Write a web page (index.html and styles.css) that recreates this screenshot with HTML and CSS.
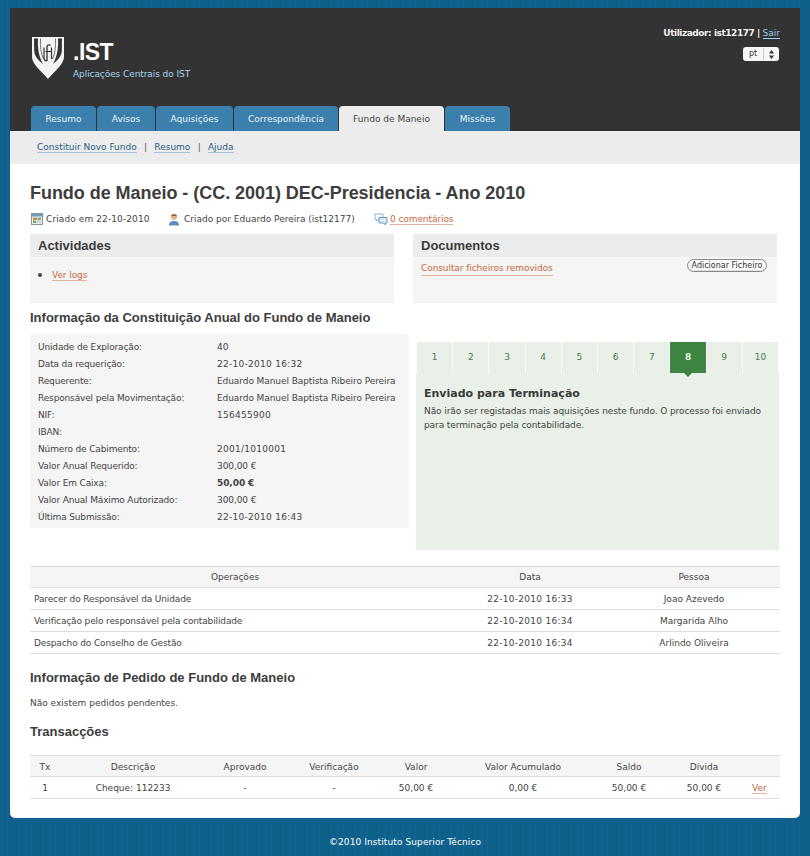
FILE: index.html
```html
<!DOCTYPE html>
<html lang="pt">
<head>
<meta charset="utf-8">
<title>Fundo de Maneio</title>
<link rel="stylesheet" href="styles.css">
</head>
<body>
<div class="page">
  <header class="top">
    <div class="top-row">
      <div class="brand">
        <svg class="logo" width="32" height="42" viewBox="0 0 32 42">
          <path d="M0 0H32V20C32 27 22 35 16 42C10 35 0 27 0 20Z" fill="#f4f4f4"/>
          <path d="M2 1.500H6C5.500 10 6.500 19 11 27C6 23 2.500 19 2.200 14Z" fill="#333"/>
          <path d="M30 1.500H26C26.500 10 25.500 19 21 27C26 23 29.500 19 29.800 14Z" fill="#333"/>
          <path d="M8.500 1.500C8 9 9 17 11.500 22" fill="none" stroke="#555" stroke-width=".8"/>
          <path d="M23.500 1.500C24 9 23 17 20.500 22" fill="none" stroke="#555" stroke-width=".8"/>
          <path d="M12 10.500V21C12 23 13.500 24 15 24" fill="none" stroke="#333" stroke-width="1.200"/>
          <path d="M15 24V9.500C15 7.500 18 7.500 18.500 8.500" fill="none" stroke="#333" stroke-width="1.300"/>
          <path d="M13.500 14.500H19.500M19.500 10.500V22" fill="none" stroke="#333" stroke-width="1.200"/>
        </svg>
        <div class="brand-text">
          <div class="brand-name">.IST</div>
          <div class="brand-sub">Aplicações Centrais do IST</div>
        </div>
      </div>
      <div class="user-area">
        <div class="user">Utilizador: ist12177 | <a class="user-link" href="#">Sair</a></div>
        <div class="lang"><span class="lang-val">pt</span><span class="lang-arrows"><svg width="5" height="9" viewBox="0 0 5 9"><path d="M2.500 0L5 3.500H0ZM2.500 9L0 5.500H5Z" fill="#333"/></svg></span></div>
      </div>
    </div>
    <nav class="tabs">
      <a class="tab t1" href="#">Resumo</a>
      <a class="tab t2" href="#">Avisos</a>
      <a class="tab t3" href="#">Aquisições</a>
      <a class="tab t4" href="#">Correspondência</a>
      <a class="tab t5 active" href="#">Fundo de Maneio</a>
      <a class="tab t6" href="#">Missões</a>
    </nav>
  </header>
  <div class="subnav">
    <a class="navlink" href="#">Constituir Novo Fundo</a><span class="sep">|</span><a class="navlink" href="#">Resumo</a><span class="sep">|</span><a class="navlink" href="#">Ajuda</a>
  </div>
  <main class="content">
    <h1 class="title">Fundo de Maneio - (CC. 2001) DEC-Presidencia - Ano 2010</h1>
    <div class="meta">
      <span class="meta-item m1">
        <svg width="12" height="12" viewBox="0 0 12 12"><rect x=".5" y=".5" width="11" height="11" fill="#e8eef2" stroke="#7f97a8"/><rect x="1" y="1" width="10" height="2.500" fill="#6f9ec0"/><rect x="2" y="4.500" width="4" height="2.500" fill="#d98a4a"/><rect x="6.500" y="4.500" width="3.500" height="2.500" fill="#8db56a"/><rect x="2" y="7.500" width="3" height="2.500" fill="#7fa85f"/><rect x="5.500" y="7.500" width="4.500" height="2.500" fill="#c9d3da"/></svg>
        <span class="created">Criado em 22-10-2010</span>
      </span>
      <span class="meta-item m2">
        <svg width="12" height="13" viewBox="0 0 12 13"><path d="M1 12.500C1 9 3 8 6 8C9 8 11 9 11 12.500Z" fill="#5b8fc4"/><circle cx="6" cy="4" r="3" fill="#e4b48c"/><path d="M3 3.500C3 .5 9 .5 9 3.500C7.500 2.500 4.500 2.500 3 3.500Z" fill="#8a5a34"/></svg>
        Criado por Eduardo Pereira (ist12177)
      </span>
      <span class="meta-item m3">
        <svg width="14" height="13" viewBox="0 0 14 13"><path d="M1 1H9V6.500H4L2.500 8V6.500H1Z" fill="#fff" stroke="#7ea6cf" stroke-width=".9"/><path d="M5 4.500H13V10H11.500V12L9.500 10H5Z" fill="#dfeaf5" stroke="#5f8fc0" stroke-width=".9"/></svg>
        <a class="link tight" href="#">0 comentários</a>
      </span>
    </div>
    <div class="boxes">
      <section class="box">
        <h3 class="box-head">Actividades</h3>
        <div class="box-body">
          <ul class="logs"><li class="log-item"><a class="link tight" href="#">Ver logs</a></li></ul>
        </div>
      </section>
      <section class="box">
        <h3 class="box-head">Documentos</h3>
        <div class="box-body docs">
          <a class="link tight" href="#">Consultar ficheiros removidos</a>
          <button class="btn" type="button">Adicionar Ficheiro</button>
        </div>
      </section>
    </div>
    <h2 class="section first">Informação da Constituição Anual do Fundo de Maneio</h2>
    <div class="info-row">
      <dl class="info">
        <dt>Unidade de Exploração:</dt><dd>40</dd>
        <dt>Data da requerição:</dt><dd class="num">22-10-2010 16:32</dd>
        <dt>Requerente:</dt><dd>Eduardo Manuel Baptista Ribeiro Pereira</dd>
        <dt>Responsável pela Movimentação:</dt><dd>Eduardo Manuel Baptista Ribeiro Pereira</dd>
        <dt>NIF:</dt><dd class="num">156455900</dd>
        <dt>IBAN:</dt><dd></dd>
        <dt>Número de Cabimento:</dt><dd class="num">2001/1010001</dd>
        <dt>Valor Anual Requerido:</dt><dd>300,00 €</dd>
        <dt>Valor Em Caixa:</dt><dd class="strong">50,00 €</dd>
        <dt>Valor Anual Máximo Autorizado:</dt><dd>300,00 €</dd>
        <dt>Última Submissão:</dt><dd class="num">22-10-2010 16:43</dd>
      </dl>
      <div class="flow">
        <div class="steps">
          <span class="step">1</span><span class="step">2</span><span class="step">3</span><span class="step">4</span><span class="step">5</span><span class="step">6</span><span class="step">7</span><span class="step current">8</span><span class="step">9</span><span class="step">10</span>
        </div>
        <div class="panel">
          <h4 class="panel-title">Enviado para Terminação</h4>
          <p class="panel-text">Não irão ser registadas mais aquisições neste fundo. O processo foi enviado para terminação pela contabilidade.</p>
        </div>
      </div>
    </div>
    <table class="grid ops">
      <thead><tr><th class="o1">Operações</th><th class="o2">Data</th><th class="o3">Pessoa</th></tr></thead>
      <tbody>
        <tr><td class="left">Parecer do Responsável da Unidade</td><td class="num">22-10-2010 16:33</td><td>Joao Azevedo</td></tr>
        <tr><td class="left">Verificação pelo responsável pela contabilidade</td><td class="num">22-10-2010 16:34</td><td>Margarida Alho</td></tr>
        <tr><td class="left">Despacho do Conselho de Gestão</td><td class="num">22-10-2010 16:34</td><td>Arlindo Oliveira</td></tr>
      </tbody>
    </table>
    <h2 class="section second">Informação de Pedido de Fundo de Maneio</h2>
    <p class="pending">Não existem pedidos pendentes.</p>
    <h2 class="section third">Transacções</h2>
    <table class="grid tx">
      <thead><tr><th class="c1">Tx</th><th class="c2">Descrição</th><th class="c3">Aprovado</th><th class="c4">Verificação</th><th class="c5">Valor</th><th class="c6">Valor Acumulado</th><th class="c7">Saldo</th><th class="c8">Dívida</th><th class="c9"></th></tr></thead>
      <tbody>
        <tr><td>1</td><td>Cheque: 112233</td><td>-</td><td>-</td><td>50,00 €</td><td>0,00 €</td><td>50,00 €</td><td>50,00 €</td><td class="ver"><a class="link" href="#">Ver</a></td></tr>
      </tbody>
    </table>
  </main>
  <footer class="foot">©2010 Instituto Superior Técnico</footer>
</div>
</body>
</html>
```
FILE: styles.css
```css
* { box-sizing: border-box; }
html, body { margin: 0; padding: 0; }
body {
  height: 856px;
  overflow: hidden;
  background: #10638f repeating-linear-gradient(90deg, #10638f 0, #10638f 3px, #0f5f8b 3px, #0f5f8b 6px);
  font-family: "DejaVu Sans", Verdana, sans-serif;
  font-size: 9px;
  color: #444;
}
a { text-decoration: none; }
.page { width: 790px; margin-left: 10px; padding-top: 8px; }
.num { letter-spacing: .27px; }
.created { letter-spacing: .1px; }
.tight { letter-spacing: -.08px; }

.top { height: 123px; background: #333; display: flex; flex-direction: column; justify-content: space-between; }
.top-row { display: flex; justify-content: space-between; padding: 19px 20px 0 22px; }
.brand { display: flex; gap: 9px; padding-top: 10px; }
.logo { display: block; }
.brand-name { font: bold 23px/24px "Liberation Sans", Arial, sans-serif; color: #fff; padding-top: 3px; letter-spacing: -.5px; }
.brand-sub { color: #a9d3ef; line-height: 12px; margin-top: 4px; letter-spacing: -.08px; }
.user-area { display: flex; flex-direction: column; align-items: flex-end; }
.user { color: #f2f2f2; font-weight: bold; font-size: 9px; line-height: 12px; letter-spacing: -.45px; }
.user-link { color: #9ecdee; font-weight: normal; border-bottom: 1px solid #9ecdee; letter-spacing: 0; }
.lang { display: flex; margin: 8px 1px 0 0; width: 36px; height: 14px; background: #f6f6f6; border-radius: 3px; align-items: center; font-size: 8px; color: #333; }
.lang-val { width: 21px; text-align: center; border-right: 1px solid #ccc; line-height: 12px; }
.lang-arrows { flex: 1; display: flex; justify-content: center; }

.tabs { display: flex; gap: 1px; padding-left: 21px; }
.tab { height: 25px; line-height: 26px; text-align: center; background: #3b80ad; color: #eaf3f9; border-radius: 4px 4px 0 0; }
.tab.active { background: #ececec; color: #444; }
.t1 { width: 65px; }
.t2 { width: 58px; }
.t3 { width: 77px; }
.t4 { width: 104px; }
.t5 { width: 105px; }
.t6 { width: 65px; }

.subnav { height: 33px; background: #ececec; padding: 10px 0 0 27px; line-height: 13px; }
.navlink { color: #2b5f85; border-bottom: 1px solid #a9c3d6; }
.sep { margin: 0 7.25px; color: #555; }

.content { height: 654px; background: #fff; border-radius: 0 0 5px 5px; padding: 18px 20px 0; }
.title { margin: 0; font: bold 18px/22px "Liberation Sans", Arial, sans-serif; color: #3d3d3d; letter-spacing: -.04px; }
.meta { display: flex; align-items: center; height: 14px; margin-top: 8px; }
.meta-item { display: flex; align-items: center; gap: 3px; }
.m1 { width: 134px; padding-left: 1px; }
.m2 { width: 210px; padding-left: 4px; gap: 4px; }
.m3 { gap: 2px; }
.link { color: #c8693f; border-bottom: 1px solid #e3b09a; }

.boxes { display: flex; justify-content: space-between; width: 747px; margin-top: 8px; }
.box { width: 364px; height: 69px; background: #f5f5f5; }
.box-head { margin: 0; height: 23px; padding-left: 8px; background: #ececec; font: bold 13px/23px "Liberation Sans", Arial, sans-serif; color: #3d3d3d; }
.box-body { position: relative; }
.logs { margin: 0; padding: 11px 0 0 8px; list-style: none; }
.log-item { line-height: 14px; padding-left: 14px; position: relative; }
.log-item::before { content: ""; position: absolute; left: 0; top: 5px; width: 4px; height: 4px; border-radius: 50%; background: #444; }
.docs { display: flex; justify-content: space-between; align-items: flex-start; padding: 4px 10px 0 8px; line-height: 14px; }
.btn { height: 13px; width: 80px; padding: 0; margin-top: -2px; border: 1px solid #888; border-radius: 7px; background: #fbfbfb; font: 8px/11px "DejaVu Sans", Verdana, sans-serif; color: #333; box-shadow: inset 0 -1px 1px #ddd; }

.section { margin: 0; font: bold 13px/18px "Liberation Sans", Arial, sans-serif; color: #3d3d3d; }
.first { margin-top: 6px; }
.info-row { display: flex; margin-top: 7px; }
.info { width: 379px; height: 194px; margin: 0; padding: 5px 0 0 8px; background: #f5f5f5; border-radius: 3px; display: grid; grid-template-columns: 179px 1fr; grid-auto-rows: 17px; line-height: 17px; }
.info dt { letter-spacing: -.15px; }
.info dd { margin: 0; letter-spacing: -.08px; }
.info dd.num { letter-spacing: .27px; }
.strong { font-weight: bold; }
.flow { width: 363px; margin-left: 7px; padding-top: 8px; }
.steps { display: flex; gap: 1px; height: 31px; padding: 0 1px; }
.step { flex: 1; text-align: center; line-height: 31px; background: #e8f0e8; color: #4a7a4c; position: relative; }
.step.current { background: #3d8540; color: #e8f5e8; font-weight: bold; }
.step.current::after { content: ""; position: absolute; left: 50%; bottom: -4px; margin-left: -4px; border-left: 4px solid transparent; border-right: 4px solid transparent; border-top: 4px solid #3d8540; }
.panel { height: 177px; background: #e8f0e8; padding: 14px 8px 0; }
.panel-title { margin: 0; font-size: 11px; line-height: 13px; font-weight: bold; color: #3a3a3a; }
.panel-text { margin: 4px 0 0; line-height: 14px; letter-spacing: -.09px; }

.grid { width: 750px; border-collapse: collapse; table-layout: fixed; text-align: center; }
.grid th { height: 21px; font-weight: normal; background: #f5f5f5; border-top: 1px solid #ddd; border-bottom: 1px solid #ddd; padding: 0; }
.grid td { height: 22px; border-bottom: 1px solid #ddd; padding: 0; }
.ops { margin-top: 16px; }
.o1 { width: 410px; }
.o2 { width: 180px; }
.o3 { width: 160px; }
.ops th.o3 { padding-right: 12px; }
.ops td:last-child { padding-right: 12px; }
.grid td.left { text-align: left; padding-left: 4px; letter-spacing: -.13px; }
.second { margin-top: 15px; }
.pending { margin: 10px 0 0; line-height: 12px; }
.third { margin-top: 14px; }
.tx { margin-top: 14px; }
.tx th { padding-top: 2px; }
.tx td { padding-top: 1px; }
.c1 { width: 30px; }
.c2 { width: 146px; }
.c3 { width: 78px; }
.c4 { width: 100px; }
.c5 { width: 64px; }
.c6 { width: 150px; }
.c7 { width: 62px; }
.c8 { width: 88px; }
.c9 { width: 32px; }
.grid td.ver { text-align: left; padding-left: 4px; }

.foot { text-align: center; color: #fff; line-height: 12px; margin-top: 18px; letter-spacing: .1px; }
```
